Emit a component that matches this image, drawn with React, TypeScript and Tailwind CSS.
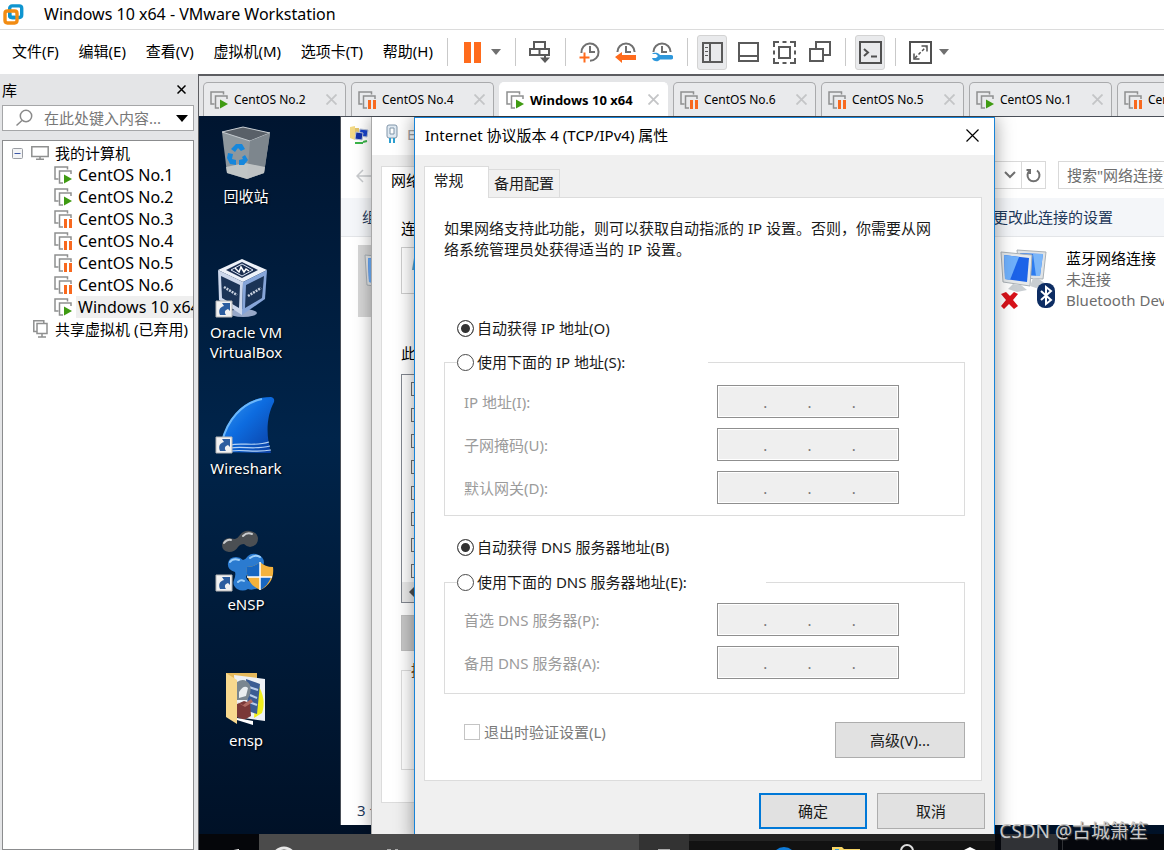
import React from "react";
import clsx from "clsx";

type VmState = "running" | "paused";

const menus = ["文件(F)", "编辑(E)", "查看(V)", "虚拟机(M)", "选项卡(T)", "帮助(H)"];

const library: { name: string; state: VmState }[] = [
  { name: "CentOS No.1", state: "running" },
  { name: "CentOS No.2", state: "running" },
  { name: "CentOS No.3", state: "paused" },
  { name: "CentOS No.4", state: "paused" },
  { name: "CentOS No.5", state: "paused" },
  { name: "CentOS No.6", state: "paused" },
  { name: "Windows 10 x64", state: "running" },
];

const tabs: { name: string; state: VmState }[] = [
  { name: "CentOS No.2", state: "running" },
  { name: "CentOS No.4", state: "paused" },
  { name: "Windows 10 x64", state: "running" },
  { name: "CentOS No.6", state: "paused" },
  { name: "CentOS No.5", state: "paused" },
  { name: "CentOS No.1", state: "running" },
  { name: "CentOS No.3", state: "paused" },
];

const ACTIVE_VM = "Windows 10 x64";

export default function App() {
  return (
    <div className="flex h-screen flex-col overflow-hidden bg-[#e4e5e7] font-['Noto_Sans','Noto_Sans_CJK_SC',sans-serif] text-[15px] leading-5 text-black">
      <TitleBar />
      <MenuBar />
      <div className="flex min-h-0 flex-1">
        <Library />
        <main className="flex min-w-0 flex-1 flex-col border-t-2 border-l border-[#5c5d61]">
          <VmTabs />
          <GuestScreen />
        </main>
      </div>
    </div>
  );
}

/* ---------- Workstation chrome ---------- */

const TitleBar = () => (
  <header className="flex h-[30px] shrink-0 items-center gap-5 border-b border-[#dcdcdc] bg-white pl-[3px]">
    <svg width="21" height="21" viewBox="0 0 21 21" fill="none" strokeWidth="3.4">
      <rect x="6.7" y="1.9" width="12" height="11.6" rx="2.4" stroke="#0f95d0" />
      <rect x="2" y="7" width="12" height="12" rx="2.4" stroke="#f28c13" />
      <path d="M6.7 9v2.4q0 2.1 2.1 2.1H12" stroke="#0f95d0" />
    </svg>
    <h1 className="pb-px text-base leading-5">Windows 10 x64 - VMware Workstation</h1>
  </header>
);

const Separator = () => <span className="mr-[9px] ml-[10px] h-7 w-px shrink-0 bg-[#c9c9c9]" />;

const ToolButton = ({ label, pressed, children }: { label: string; pressed?: boolean; children: React.ReactNode }) => (
  <button
    aria-label={label}
    className={clsx(
      "flex h-[35px] w-[30px] shrink-0 items-center justify-center rounded-[3px]",
      pressed && "border border-[#d3d3d3] bg-[#e9eaec]"
    )}
  >
    {children}
  </button>
);

const Caret = ({ label }: { label: string }) => (
  <button aria-label={label} className="flex h-[35px] w-[18px] shrink-0 items-center justify-center">
    <svg width="10" height="6" viewBox="0 0 10 6">
      <path d="M0 0h10L5 6z" fill="#707070" />
    </svg>
  </button>
);

const Clock = ({ children }: { children: React.ReactNode }) => (
  <svg width="22" height="22" viewBox="0 0 22 22" fill="none">
    {children}
  </svg>
);

const MenuBar = () => (
  <div className="flex h-[44px] shrink-0 items-center bg-white pl-3">
    <nav className="flex w-[425px] shrink-0 justify-between pr-1 pb-[2px] whitespace-nowrap">
      {menus.map((m) => (
        <button key={m}>{m}</button>
      ))}
    </nav>
    <Separator />
    <div className="flex items-center">
      <ToolButton label="挂起">
        <svg width="17" height="21" viewBox="0 0 17 21" fill="#ff6b1c">
          <path d="M0 0h7v21H0zM10 0h7v21h-7z" />
        </svg>
      </ToolButton>
      <Caret label="电源" />
    </div>
    <Separator />
    <ToolButton label="发送 Ctrl+Alt+Del">
      <svg width="22" height="22" viewBox="0 0 22 22" fill="none" stroke="#5a5a5a" strokeWidth="2">
        <path d="M5 7V1h11v6M1 8h19v6H1zM10.500 8v6M16 14v5" />
        <path d="M11 16.500h10L16 22z" fill="#5a5a5a" stroke="none" />
      </svg>
    </ToolButton>
    <Separator />
    <div className="flex gap-[6px]">
      <ToolButton label="拍摄快照">
        <Clock>
          <path d="M2.400 12A8.600 8.600 0 1 1 11 19.800" stroke="#707070" strokeWidth="2" />
          <path d="M11 5v6h5" stroke="#707070" strokeWidth="2" />
          <path d="M5.500 11.500v10M.5 16.500h10" stroke="#ff6b1c" strokeWidth="2" />
        </Clock>
      </ToolButton>
      <ToolButton label="恢复快照">
        <Clock>
          <path d="M2.400 11A8.600 8.600 0 0 1 19.600 11" stroke="#707070" strokeWidth="2" />
          <path d="M11 5v6h5" stroke="#707070" strokeWidth="2" />
          <path d="M0 16l7-5v3h14v5H7v3z" fill="#ff6b1c" />
        </Clock>
      </ToolButton>
      <ToolButton label="管理快照">
        <Clock>
          <path d="M2.400 11A8.600 8.600 0 0 1 19.600 11" stroke="#707070" strokeWidth="2" />
          <path d="M11 5v6h5" stroke="#707070" strokeWidth="2" />
          <path d="M1 13h4l2 2-2 2H1c1 3.500 6 4.500 8 1.500h11a1.500 1.500 0 0 0 0-4.500H9c-2-3-7-2.500-8-1z" fill="#2e98dc" />
        </Clock>
      </ToolButton>
    </div>
    <Separator />
    <div className="flex gap-[6px]">
      <ToolButton label="显示库" pressed>
        <svg width="21" height="21" viewBox="0 0 21 21" fill="none" stroke="#5a5a5a" strokeWidth="2">
          <path d="M1 1h19v19H1zM8 1v19" />
          <path d="M3 5.500h3M3 9.500h3M3 13.500h3" strokeWidth="1" />
        </svg>
      </ToolButton>
      <ToolButton label="缩略图栏">
        <svg width="21" height="20" viewBox="0 0 21 20" fill="none" stroke="#5a5a5a" strokeWidth="2">
          <path d="M1 1h19v18H1zM1 14h19" />
        </svg>
      </ToolButton>
      <ToolButton label="全屏">
        <svg width="23" height="23" viewBox="0 0 23 23" fill="none" stroke="#5a5a5a" strokeWidth="2">
          <path d="M6 6h11v11H6zM1 6V1h5M17 1h5v5M22 17v5h-5M6 22H1v-5M9.500 1h4M9.500 22h4M1 9.500v4M22 9.500v4" />
        </svg>
      </ToolButton>
      <ToolButton label="Unity">
        <svg width="22" height="22" viewBox="0 0 22 22" fill="none" stroke="#5a5a5a" strokeWidth="2">
          <path d="M7 7V1h14v13h-6M1 8h13v12H1z" />
        </svg>
      </ToolButton>
    </div>
    <Separator />
    <ToolButton label="控制台视图" pressed>
      <svg width="23" height="23" viewBox="0 0 23 23" fill="none" stroke="#505050" strokeWidth="2" className="shrink-0">
        <path d="M1 1h21v21H1zM5 8l4 3.500-4 3.500M12 15.500h6" />
      </svg>
    </ToolButton>
    <Separator />
    <ToolButton label="自由拉伸">
      <svg width="23" height="23" viewBox="0 0 23 23" fill="none" stroke="#505050" strokeWidth="2">
        <path d="M1 1h21v21H1z" />
        <path d="M6 17l11-11" strokeDasharray="3 2" strokeWidth="1.500" />
        <path d="M12.500 5H18v5.500M5 12.500V18h5.500" strokeWidth="1.500" />
      </svg>
    </ToolButton>
    <Caret label="拉伸选项" />
  </div>
);

const VmIcon = ({ state }: { state: VmState }) => (
  <svg width="18" height="18" viewBox="0 0 18 18" fill="none" className="shrink-0">
    <path d="M4.500 13H1V1h12.500v2.500" stroke="#8f9090" strokeWidth="1.500" />
    <path d="M9 17H5.500V5H17v3" stroke="#8f9090" strokeWidth="1.500" />
    {state === "running" ? (
      <path d="M10 8.500l8 4.500-8 4.500z" fill="#3f9b12" />
    ) : (
      <path d="M10 9h3v9h-3zM15 9h3v9h-3z" fill="#f8691f" />
    )}
  </svg>
);

const Library = () => (
  <aside className="flex w-[198px] shrink-0 flex-col pr-1 pl-[2px]">
    <div className="flex h-[31px] items-center justify-between pr-2">
      <h2>库</h2>
      <button aria-label="关闭库">
        <svg width="9" height="9" viewBox="0 0 9 9" stroke="#000" strokeWidth="1.500">
          <path d="M.5.5l8 8M8.500.5l-8 8" />
        </svg>
      </button>
    </div>
    <div className="flex h-[26px] shrink-0 items-center border border-[#a5a6a8] bg-white pr-[5px] pl-3">
      <svg width="18" height="18" viewBox="0 0 18 18" fill="none" stroke="#8a8a8a" strokeWidth="1.500" className="shrink-0">
        <circle cx="11" cy="7" r="5.700" />
        <path d="M7 11.500l-5.500 5" />
      </svg>
      <input
        aria-label="搜索库"
        placeholder="在此处键入内容..."
        className="ml-[11px] w-[124px] min-w-0 outline-none placeholder:text-[#777]"
      />
      <button aria-label="搜索选项" className="ml-auto">
        <svg width="12" height="7" viewBox="0 0 12 7">
          <path d="M0 0h12L6 7z" />
        </svg>
      </button>
    </div>
    <div className="mt-[9px] flex-1 overflow-hidden border border-[#8b8c8e] bg-white pt-px whitespace-nowrap">
      <div className="flex h-[22px] items-center pl-[9px]">
        <svg width="11" height="11" viewBox="0 0 11 11" fill="#f3f4f6" stroke="#9a9da3" className="mr-2">
          <rect x=".5" y=".5" width="10" height="10" rx="1" />
          <path d="M2.500 5.500h6" stroke="#3c57a8" />
        </svg>
        <svg width="18" height="14" viewBox="0 0 18 14" fill="none" stroke="#8f9090" strokeWidth="1.500" className="mr-[6px]">
          <path d="M.8.8h16.400v9.700H.8zM9 10.500v2M5 13.200h8" />
        </svg>
        我的计算机
      </div>
      <ul className="text-base leading-[22px]">
        {library.map((vm) => (
          <li key={vm.name} className="flex h-[22px] items-center overflow-hidden pl-[51px]">
            <VmIcon state={vm.state} />
            <span className={clsx("ml-1 flex-1 pl-[2px]", vm.name === ACTIVE_VM && "bg-[#efefef]")}>{vm.name}</span>
          </li>
        ))}
      </ul>
      <div className="flex h-[22px] items-center pl-[30px]">
        <svg width="15" height="18" viewBox="0 0 15 18" fill="none" stroke="#8f9090" strokeWidth="1.500" className="mr-[7px]">
          <path d="M3.500 11.500H.8V.8h10v2M4 3.500h10v10H4zM9 13.500v3M5 17h8" />
        </svg>
        共享虚拟机 (已弃用)
      </div>
    </div>
  </aside>
);

const VmTabs = () => (
  <div className="flex h-10 shrink-0 items-end gap-[5px] overflow-hidden pl-1 text-[12px] whitespace-nowrap">
    {tabs.map((t) => {
      const active = t.name === ACTIVE_VM;
      return (
        <div
          key={t.name}
          className={clsx(
            "flex h-[34px] shrink-0 items-center rounded-t-[5px] border border-b-0 pr-2 pl-[6px]",
            active ? "w-[169px] border-white bg-white text-[13px] font-bold" : "w-[143px] border-[#a9aaac] bg-[#e9eaec]"
          )}
        >
          <VmIcon state={t.state} />
          <button className="ml-[6px]">{t.name}</button>
          <button aria-label={"关闭 " + t.name} className="ml-auto">
            <svg width="11" height="11" viewBox="0 0 11 11" stroke="#c4c5c7" strokeWidth="1.800">
              <path d="M.5.5l10 10M10.500.5l-10 10" />
            </svg>
          </button>
        </div>
      );
    })}
  </div>
);

/* ---------- Guest desktop ---------- */

const GuestScreen = () => (
  <div className="relative min-h-0 flex-1 overflow-hidden bg-[#001127]">
    <div className="relative h-[718px] overflow-hidden bg-gradient-to-b from-[#001530] via-[#00244a] via-45% to-[#001127]">
      <DesktopIcons />
      <ConnectionsWindow />
      <AdapterWindow />
      <Ipv4Dialog />
    </div>
    <Taskbar />
    <p className="absolute right-4 bottom-[5px] text-[19px] leading-7 text-[#c8c8c8] [text-shadow:1px_1px_1px_#444]">CSDN @古城箫笙</p>
  </div>
);

const Shortcut = () => (
  <g>
    <path d="M0 40h16v16H0z" fill="#f2f2f2" stroke="#b5b5b5" />
    <path d="M4 54c-2-5 0-8 4-9l-2-3h8v8l-2-2c-3 1-4 3-2 6z" fill="#2c5d9f" />
  </g>
);

const RecycleBin = () => (
  <svg width="60" height="56" viewBox="0 0 60 56">
    <path d="M10 8l21-5 27 6-6 40-17 6-20-6z" fill="#8e979d" />
    <path d="M10 8l21-5 27 6-20 8z" fill="#596068" stroke="#c5cbd0" />
    <path d="M38 17l20-8-6 40-17 6z" fill="#7d868d" />
    <path d="M14 43l19-4 20 4-1 6-17 6-20-6z" fill="#c9cccd" opacity=".85" />
    <g fill="#1687dc">
      <path d="M19 25l5-5h6l3 5-4 2-3-3-3 4zM33 31l3 5-4 5h-5v-5l4-1-1-2zM16 29l5 1-1 5 4 1v5l-6-1-3-6z" />
    </g>
  </svg>
);

const VirtualBox = () => (
  <svg width="60" height="58" viewBox="0 0 60 58" className="-mt-px overflow-visible">
    <ellipse cx="31" cy="54" rx="14" ry="4" fill="#97a8c8" />
    <path d="M6 11L30 0l25 11-24 12z" fill="#eef2f9" />
    <path d="M6 11l25 12-1 33L7 41z" fill="#ccd7eb" />
    <path d="M55 11L31 23l-1 33 23-16z" fill="#86a5d8" />
    <path d="M14 11l16-8 16 8-16 8z" fill="#1b2e50" />
    <path d="M19 11l11-6 11 6-11 6z" fill="none" stroke="#dbe4f4" />
    <path d="M23 9l4 4 2-5 3 5 2-3 3 2" fill="none" stroke="#fff" strokeWidth="1.500" />
    <path d="M9 17l19 9-1 23-17-10zM52 17l-18 9-1 23 17-10z" fill="#1b3457" />
    <path d="M12 28l13 8M36 37l13-8" stroke="#c9d2e0" strokeWidth="2.500" strokeDasharray="2 1" />
    <g transform="translate(4 2)"><Shortcut /></g>
  </svg>
);

const Wireshark = () => (
  <svg width="60" height="56" viewBox="0 0 60 56" className="overflow-visible">
    <defs>
      <linearGradient id="fin" x1="0" y1="0" x2="1" y2="1">
        <stop offset="0" stopColor="#3a9af2" />
        <stop offset=".45" stopColor="#0d6ce0" />
        <stop offset="1" stopColor="#0b3da0" />
      </linearGradient>
    </defs>
    <path d="M8 56C11 27 29 1 59 1q4 1 3 5c-8 15-8 34-3 51z" fill="url(#fin)" />
    <path d="M10 46C15 24 30 7 50 3" fill="none" stroke="#6bb7fa" strokeWidth="2" />
    <path d="M18 49c12-3 24 2 39-3M18 52c14-2 25 2 40-2M18 55c14-2 25 2 41-1" fill="none" stroke="#b5d3f5" strokeWidth="1.200" />
    <g transform="translate(4 1)"><Shortcut /></g>
  </svg>
);

const Ensp = () => (
  <svg width="60" height="58" viewBox="0 0 60 58" className="overflow-visible">
    <path d="M10 13q1-7 8-7 3 1 5 1 3-1 5-4 4-5 10-4 7 1 8 7 0 8-8 9-3 0-6-3-4 0-6 3-3 5-9 5-7-1-7-7z" fill="#4b4f53" />
    <path d="M12 11q3-4 7-3M31 4q4-4 9-2" stroke="#c9cccf" strokeWidth="2" strokeLinecap="round" fill="none" />
    <path
      d="M16 31q1-6 8-6 4 0 7 3 3-1 5-4 3-3 8-2 8 2 8 9-2 7-11 6-5 2-7 8 1 5 8 6l6 4q-7 4-12 2-5 3-11 0-5-4-3-9 2-5 1-8-8-2-7-9z"
      fill="#2b7bd0"
    />
    <path d="M18 30q3-4 9-2M38 26q5-4 10-1M26 50q3-3 6-1" stroke="#9fd0fa" strokeWidth="2" strokeLinecap="round" fill="none" />
    <path d="M35 35q8 0 13-5 5 5 13 5 2 16-13 23-15-7-13-23z" fill="#f4b23c" />
    <path d="M35 35q8 0 13-5v15H36q-2-5-1-10zM48 45h11q-3 9-11 13z" fill="#1767c2" />
    <path d="M48 30v28M35 45h25" stroke="#fff" strokeWidth="1.500" />
    <g transform="translate(4 3)"><Shortcut /></g>
  </svg>
);

const Folder = () => (
  <svg width="60" height="58" viewBox="0 0 60 58" className="overflow-visible">
    <path d="M14 5h31v8H14z" fill="#e5b95c" />
    <path d="M22 7l31 4v42l-28-4z" fill="#eef1f5" />
    <path d="M45 15q10 16 5 30l-8 5z" fill="#f0ee1c" />
    <path d="M34 11l14 5-3 30-9-3z" fill="#3b5d93" />
    <path d="M37 19l9 3M38 27l7 3M37 34l8 3" stroke="#b9cdea" strokeWidth="2" />
    <path d="M25 14q8-5 13 3 2 8-3 15H25z" fill="#7a8790" />
    <path d="M27 24q5-8 9-4l-2 8-7 2z" fill="#e9eef0" />
    <path d="M25 36l7-3 6 2 1 13-7 4-7-3z" fill="#7a3838" />
    <path d="M25 34l6 3 8-6 2 3-8 5z" fill="#b06a62" />
    <path d="M14 5l11 7v44l-11-7z" fill="#f8d98e" />
    <path d="M25 50l16 3v4l-16-5z" fill="#fff" />
  </svg>
);

const desktopItems = [
  { label: "回收站", icon: <RecycleBin /> },
  { label: "Oracle VM VirtualBox", icon: <VirtualBox /> },
  { label: "Wireshark", icon: <Wireshark /> },
  { label: "eNSP", icon: <Ensp /> },
  { label: "ensp", icon: <Folder /> },
];

const DesktopIcons = () => (
  <ul className="w-[94px] pt-2">
    {desktopItems.map((item) => (
      <li key={item.label} className="flex h-[136px] flex-col items-center gap-[6px] text-center">
        <div className="h-[56px] pr-2">{item.icon}</div>
        <span className="text-white [text-shadow:1px_1px_2px_#000]">{item.label}</span>
      </li>
    ))}
  </ul>
);

const Monitors = ({ bluetooth }: { bluetooth?: boolean }) => (
  <svg width="56" height="64" viewBox="0 0 56 64">
    <path d="M17 2l29 2-3 27-23-1z" fill="#dfe3e6" stroke="#a9b0b5" />
    <path d="M20 5l23 1-3 22-18-1z" fill="#2c7cf0" />
    <path d="M33 6l10 0-3 22-4 0z" fill="#7ab6fa" />
    <path d="M1 4l31 3-2 31-27-4z" fill="#e5e8ea" stroke="#a9b0b5" />
    <path d="M4 7l25 3-2 24-22-3z" fill="#1c63e8" />
    <path d="M4 7l15 2-9 23-5-1z" fill="#6fb0fb" />
    <path d="M13 36l8 1 6 5-10 2-9-3zM33 30l6 1 7 5-10 4-6-2z" fill="#c9ced2" />
    {bluetooth && (
      <g>
        <path d="M1 46l5-2 4 4 4-4 4 2-5 6 5 6-4 3-5-5-5 5-3-3 5-6z" fill="#d8131b" />
        <rect x="37" y="35" width="18" height="25" rx="8" fill="#0d2d63" />
        <path d="M41 43l10 9-5 4V39l5 4-10 9" fill="none" stroke="#fff" strokeWidth="2" />
      </g>
    )}
  </svg>
);

// Explorer window at the back; its middle part lies under the dialogs
const ConnectionsWindow = () => (
  <section className="absolute top-0 right-0 left-[141px] flex h-[709px] flex-col overflow-hidden border-t border-l border-[#4a4f58] bg-white whitespace-nowrap">
    <div className="flex h-[44px] items-start pt-2 pl-2">
      <svg width="20" height="20" viewBox="0 0 20 20">
        <path d="M1 2l5-1v14l-5-2z" fill="#f3d985" />
        <path d="M6 3h4v11H6z" fill="#e0c36d" />
        <path d="M11 4l8 1-1 7-8-1z" fill="#1842c9" stroke="#b9c4d9" />
        <path d="M7 7l7 1-1 7-7-1z" fill="#1230a8" stroke="#b9c4d9" />
        <path d="M6 18h8M14 17l4-1" stroke="#3bb54a" strokeWidth="2" />
      </svg>
    </div>
    <div className="grid h-[37px] grid-cols-[652px_1fr]">
      <svg width="16" height="14" viewBox="0 0 16 14" fill="none" stroke="#c9cbce" strokeWidth="1.500" className="mt-2 ml-[15px]">
        <path d="M16 7H1M7 1L1 7l6 6" />
      </svg>
      <div className="flex h-7 gap-3 text-[#6d6d6d]">
        <div className="flex w-[53px] shrink-0 border border-l-0 border-[#d9d9d9]">
          <button aria-label="最近的位置" className="flex flex-1 items-center justify-center pl-[6px]">
            <svg width="12" height="8" viewBox="0 0 12 8" fill="none" stroke="#707070" strokeWidth="2">
              <path d="M1 1l5 5 5-5" />
            </svg>
          </button>
          <button aria-label="刷新" className="flex w-6 items-center justify-center border-l border-[#d9d9d9]">
            <svg width="15" height="15" viewBox="0 0 15 15" fill="none" stroke="#707070" strokeWidth="2">
              <path d="M4 2.500a6 6 0 1 0 7 0M4 6V2H.5" />
            </svg>
          </button>
        </div>
        <input
          aria-label="搜索"
          placeholder={'搜索"网络连接"'}
          className="min-w-0 flex-1 border border-[#d9d9d9] pl-2 outline-none placeholder:text-[#6d6d6d]"
        />
      </div>
    </div>
    <div className="grid h-[39px] grid-cols-[652px_1fr] items-center border-b border-[#e3e5e8] bg-[#f4f6f9] text-[#1e395b]">
      <span className="pl-[21px]">组织</span>
      <button className="text-left">更改此连接的设置</button>
    </div>
    <div className="grid flex-1 grid-cols-[652px_1fr] pt-2">
      <div className="ml-[17px] h-[72px] w-[200px] bg-[#d6d6d6] pt-[6px] pl-[6px]">
        <Monitors />
      </div>
      <div className="flex gap-[10px] pt-[3px] pl-[7px]">
        <div className="shrink-0">
          <Monitors bluetooth />
        </div>
        <div className="leading-[21px] text-[#6d6d6d]">
          <p className="text-black">蓝牙网络连接</p>
          <p>未连接</p>
          <p>Bluetooth Device</p>
        </div>
      </div>
    </div>
    <p className="pb-[5px] pl-4 text-[#1e395b]">3 个项目</p>
  </section>
);

// Ethernet properties, only its left edge shows
const AdapterWindow = () => (
  <section className="absolute top-px left-[172px] flex h-[717px] w-[440px] flex-col overflow-hidden border-l border-[#a8a8a8] bg-[#efefef] whitespace-nowrap shadow-[0_0_16px_rgba(0,0,0,0.35)]">
    <div className="flex h-[38px] shrink-0 items-center gap-[9px] bg-white pl-[14px] pb-1 text-[#a0a0a0]">
      <svg width="12" height="20" viewBox="0 0 12 20" fill="#dfe9f2" stroke="#8095a8">
        <rect x="1" y="1" width="10" height="13" rx="2" />
        <path d="M4 4h4v6H4z" fill="#fff" />
        <path d="M4 14v5M8 14v5" stroke="#2c9fd0" strokeWidth="2" />
      </svg>
      Ethernet0 属性
    </div>
    <div className="mt-[11px] ml-[9px] flex h-[637px] flex-col border border-[#dcdcdc] bg-white pl-[19px]">
      <span className="-ml-[10px] pt-[3px]">网络</span>
      <span className="pt-7">连接时使用:</span>
      <div className="mt-[9px] h-[47px] border border-[#cfcfcf] pt-2 pl-[10px]">
        <svg width="16" height="16" viewBox="0 0 16 16" fill="#5aa5cf"><path d="M2 2h12v12H0z" /></svg>
      </div>
      <span className="pt-[49px]">此连接使用下列项目:</span>
      <div className="mt-[11px] flex h-[229px] shrink-0 flex-col gap-3 border border-[#828790] pt-[7px]">
        {[true, true, true, true, true, true, false, true].map((on, i) => (
          <input
            key={i}
            type="checkbox"
            aria-label={"项目 " + (i + 1)}
            defaultChecked={on}
            className="ml-[9px] size-[14px] shrink-0 appearance-none border border-[#707070] bg-white checked:bg-[#333] checked:shadow-[inset_0_0_0_2px_#fff]"
          />
        ))}
        <div className="-mt-2 flex flex-1 items-center bg-[#ebebeb] pl-[7px]">
          <svg width="8" height="10" viewBox="0 0 8 10" fill="#505050"><path d="M0 5l5-5v10z" /></svg>
        </div>
      </div>
      <div className="mt-3 h-9 shrink-0 border border-[#bfbfbf] bg-[#c8c8c8]" />
      <fieldset className="mt-[9px] h-[110px] shrink-0 border border-[#dcdcdc]">
        <legend className="ml-[9px] text-[#7a4a1c]">描述</legend>
      </fieldset>
    </div>
  </section>
);

/* ---------- TCP/IPv4 dialog ---------- */

const Radio = ({ id, name, label, checked }: { id: string; name: string; label: string; checked?: boolean }) => (
  <div className="flex items-center gap-[3px]">
    <input
      id={id}
      type="radio"
      name={name}
      defaultChecked={checked}
      className="size-[17px] appearance-none rounded-full border border-[#4a4a4a] bg-white checked:bg-[#333] checked:shadow-[inset_0_0_0_3px_#fff]"
    />
    <label htmlFor={id} className="pb-px">{label}</label>
  </div>
);

const AddressField = ({ id, label }: { id: string; label: string }) => (
  <div className="flex items-center justify-between text-[#9b9b9b]">
    <label htmlFor={id}>{label}</label>
    <div className="flex h-[33px] w-[182px] items-center border border-[#8f8f8f] bg-[#efefef] pr-[2px] pl-[5px] text-[#777] shadow-[inset_0_0_0_1px_#fff]">
      {[0, 1, 2, 3].map((n) => (
        <React.Fragment key={n}>
          {n > 0 && <span>.</span>}
          <input id={n === 0 ? id : undefined} aria-label={n === 0 ? undefined : label + " " + (n + 1)} disabled className="min-w-0 flex-1" />
        </React.Fragment>
      ))}
    </div>
  </div>
);

const Ipv4Dialog = () => (
  <section className="absolute top-px left-[215px] w-[581px] border border-[#1883d7] bg-[#f0f0f0] text-[#1a1a1a] shadow-[0_0_18px_rgba(0,0,0,0.4)]">
    <header className="flex h-[37px] items-center justify-between bg-white pr-[15px] pb-[3px] pl-[10px] text-black">
      <h2>Internet 协议版本 4 (TCP/IPv4) 属性</h2>
      <button aria-label="关闭">
        <svg width="13" height="13" viewBox="0 0 13 13" stroke="#000" strokeWidth="1.200">
          <path d="M.5.5l12 12M12.500.5l-12 12" />
        </svg>
      </button>
    </header>
    <div className="px-[9px] pt-[11px]">
      <div className="flex items-end" role="tablist">
        <button role="tab" aria-selected="true" className="relative z-10 -mb-px h-[32px] w-[65px] border border-b-0 border-[#dcdcdc] bg-white pr-4 pb-[6px]">
          常规
        </button>
        <button role="tab" aria-selected="false" className="h-7 w-[71px] border border-b-0 border-l-0 border-[#dcdcdc] pb-[2px]">
          备用配置
        </button>
      </div>
      <div className="mr-[3px] h-[584px] border border-[#dcdcdc] bg-white pt-5 pr-[16px] pl-[19px]">
        <p className="h-[100px] leading-[21px]">
          如果网络支持此功能，则可以获取自动指派的 IP 设置。否则，你需要从网
          <br />
          络系统管理员处获得适当的 IP 设置。
        </p>
        <div className="pl-[13px]">
          <Radio id="ip-auto" name="ip" label="自动获得 IP 地址(O)" checked />
        </div>
        <fieldset className="mt-[13px] h-[164px] border border-[#dcdcdc] pr-[65px] pl-[19px]">
          <legend className="-ml-[7px] w-[251px]">
            <Radio id="ip-manual" name="ip" label="使用下面的 IP 地址(S):" />
          </legend>
          <div className="flex flex-col gap-[10px] pt-3">
            <AddressField id="ip" label="IP 地址(I):" />
            <AddressField id="mask" label="子网掩码(U):" />
            <AddressField id="gateway" label="默认网关(D):" />
          </div>
        </fieldset>
        <div className="mt-[21px] pl-[13px]">
          <Radio id="dns-auto" name="dns" label="自动获得 DNS 服务器地址(B)" checked />
        </div>
        <fieldset className="mt-[14px] h-[122px] border border-[#dcdcdc] pr-[65px] pl-[19px]">
          <legend className="-ml-[7px] w-[309px]">
            <Radio id="dns-manual" name="dns" label="使用下面的 DNS 服务器地址(E):" />
          </legend>
          <div className="flex flex-col gap-[10px] pt-[10px]">
            <AddressField id="dns1" label="首选 DNS 服务器(P):" />
            <AddressField id="dns2" label="备用 DNS 服务器(A):" />
          </div>
        </fieldset>
        <div className="flex items-start justify-between pt-7 pl-5">
          <div className="flex items-center gap-1 text-[#7a7a7a]">
            <input id="validate" type="checkbox" disabled className="size-4 appearance-none border border-[#c4c4c4] bg-white" />
            <label htmlFor="validate">退出时验证设置(L)</label>
          </div>
          <button className="h-9 w-[130px] border border-[#adadad] bg-[#e1e1e1]">高级(V)...</button>
        </div>
      </div>
      <div className="flex justify-end gap-[10px] pt-3 pb-[14px]">
        <button className="h-9 w-[108px] border-2 border-[#0078d7] bg-[#e1e1e1]">确定</button>
        <button className="h-9 w-[108px] border border-[#adadad] bg-[#e1e1e1]">取消</button>
      </div>
    </div>
  </section>
);

// The taskbar runs on below the bottom of the window, so its buttons are cut off
const Taskbar = () => (
  <div className="flex h-[50px] bg-[#05070c]">
    <button aria-label="开始" className="flex w-[60px] shrink-0 items-center justify-center bg-[#05060a]">
      <svg width="20" height="20" viewBox="0 0 20 20" fill="#fff">
        <path d="M0 3l8-1v7H0zM9 2l11-2v9H9zM0 10h8v8l-8-1zM9 10h11v10L9 18z" />
      </svg>
    </button>
    <button aria-label="搜索" className="flex w-[380px] shrink-0 items-center bg-[#4b4b4b] pl-3">
      <svg width="26" height="28" viewBox="0 0 26 28" fill="none" stroke="#e8e8e8" strokeWidth="3">
        <circle cx="13" cy="14" r="11" />
      </svg>
      <svg width="12" height="20" viewBox="0 0 12 20" stroke="#aaa" className="ml-[90px]">
        <path d="M0 .5h4M8 .5h3" />
      </svg>
    </button>
    <button aria-label="任务视图" className="flex w-[50px] shrink-0 items-center justify-center bg-[#333]">
      <svg width="20" height="20" viewBox="0 0 20 20" fill="none" stroke="#aaa" strokeWidth="2">
        <path d="M5 1h10v18H5z" />
      </svg>
    </button>
    <div className="flex w-[306px] shrink-0 items-center justify-end bg-linear-to-b from-[#232323] from-15% to-[#121212] to-15% pr-[13px]">
      <svg width="24" height="26" viewBox="0 0 24 26"><circle cx="12" cy="13" r="12" fill="#0f7bd8" /></svg>
      <svg width="28" height="24" viewBox="0 0 28 24" className="ml-9"><path d="M0 0h10l2 2h16v22H0z" fill="#f7d565" /><path d="M3 2h4v4H3z" fill="#3aa0e0" /></svg>
      <svg width="24" height="30" viewBox="0 0 24 30" fill="none" stroke="#ddd" strokeWidth="2" className="ml-9"><circle cx="11" cy="7" r="6" /></svg>
      <svg width="24" height="24" viewBox="0 0 24 24" className="ml-[38px]"><path d="M12 0l12 6v12l-12 6-12-6V6z" fill="#fff" /></svg>
    </div>
    <div className="ml-[6px] w-[57px] shrink-0 bg-[#303236]" />
    <div className="ml-1 w-px bg-[#303236]" />
  </div>
);
